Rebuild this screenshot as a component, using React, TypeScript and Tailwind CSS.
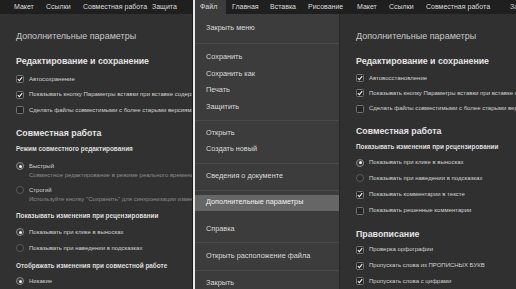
import React from "react";

const font = { fontFamily: '"Liberation Sans", Arial, sans-serif' };

// ribbon tabs with the widths they take in the screenshot
const tabs = [
  { t: "Файл", w: "w-[31px]", pl: "pl-[5px]" },
  { t: "Главная", w: "w-[38px]", pl: "pl-[6px]" },
  { t: "Вставка", w: "w-[38px]", pl: "pl-[6px]" },
  { t: "Рисование", w: "w-[49px]", pl: "pl-[6px]" },
  { t: "Макет", w: "w-[32px]", pl: "pl-[6px]" },
  { t: "Ссылки", w: "w-[37px]", pl: "pl-[6px]" },
  { t: "Совместная работа", w: "w-[84px]", pl: "pl-[6px]" },
  { t: "Защита", w: "w-[40px]", pl: "pl-[6px]" },
];

const leftTabs = [
  { t: "Макет", w: "w-[32px]", pl: "pl-[6px]" },
  { t: "Ссылки", w: "w-[37px]", pl: "pl-[6px]" },
  { t: "Совместная работа", w: "w-[75px]", pl: "pl-[6px]" },
  { t: "Защита", w: "w-[40px]", pl: "pl-[0px]" },
];

function Check({ on }: { on: boolean }) {
  return (
    <span className="w-[8px] h-[8px] shrink-0 rounded-[1.5px] border border-[#727272] bg-[#262626] flex items-center justify-center">
      {on && (
        <svg width="6" height="6" viewBox="0 0 6 6">
          <path d="M0.8 3.1 L2.4 4.6 L5.2 1.2" stroke="#f0f0f0" strokeWidth="1.1" fill="none" />
        </svg>
      )}
    </span>
  );
}

function Radio({ on }: { on: boolean }) {
  return (
    <span
      className={
        "w-[8px] h-[8px] shrink-0 rounded-full border flex items-center justify-center " +
        (on ? "border-[#8a8a8a] bg-[#3a3a3a]" : "border-[#5c5c5c] bg-[#2a2a2a]")
      }
    >
      {on && <span className="w-[3px] h-[3px] rounded-full bg-[#f2f2f2]" />}
    </span>
  );
}

function Row({ kind, on, text, h = "h-[15.5px]", mt = "" }: { kind: "cb" | "rd"; on: boolean; text: string; h?: string; mt?: string }) {
  return (
    <div className={`${h} ${mt} flex items-center gap-[5px] whitespace-nowrap`}>
      {kind === "cb" ? <Check on={on} /> : <Radio on={on} />}
      <span className="text-[6px] text-[#d2d2d2]">{text}</span>
    </div>
  );
}

function Title() {
  return <div className="h-[16px] mt-[15px] flex items-center text-[9px] text-[#c8c8c8] whitespace-nowrap">Дополнительные параметры</div>;
}

function Section({ text, mt }: { text: string; mt: string }) {
  return <div className={`h-[14px] ${mt} flex items-center text-[8.8px] font-bold text-[#e4e4e4] whitespace-nowrap`}>{text}</div>;
}

function Sub({ text, mt }: { text: string; mt: string }) {
  return <div className={`h-[14px] ${mt} flex items-center text-[6.4px] font-bold text-[#dedede] whitespace-nowrap`}>{text}</div>;
}

function TabBar({ items, active, className }: { items: { t: string; w: string; pl: string }[]; active?: string; className: string }) {
  return (
    <div className={`h-[14px] shrink-0 bg-[#1f1f1f] flex items-stretch whitespace-nowrap overflow-hidden ${className}`}>
      {items.map((t) => (
        <div
          key={t.t}
          className={`${t.w} ${t.pl} shrink-0 flex items-center text-[7px] text-[#dcdcdc] ${t.t === active ? "bg-[#3c3c3c]" : ""}`}
        >
          {t.t}
        </div>
      ))}
    </div>
  );
}

function LeftPane() {
  return (
    <div className="w-[192px] shrink-0 bg-[#313131] flex flex-col overflow-hidden">
      <TabBar items={leftTabs} className="pl-[8px]" />
      <div className="pl-[16px] flex flex-col">
        <Title />
        <Section text="Редактирование и сохранение" mt="mt-[10px]" />
        <Row kind="cb" on text="Автосохранение" mt="mt-[2.25px]" />
        <Row kind="cb" on text="Показывать кнопку Параметры вставки при вставке содержимого" />
        <Row kind="cb" on={false} text="Сделать файлы совместимыми с более старыми версиями MS Word" />
        <Section text="Совместная работа" mt="mt-[9.25px]" />
        <Sub text="Режим совместного редактирования" mt="mt-[1px]" />
        <div className="mt-[5.5px] h-[9px] flex items-center gap-[5px]">
          <Radio on />
          <span className="text-[6px] text-[#d2d2d2]">Быстрый</span>
        </div>
        <div className="h-[9px] pl-[13px] flex items-center text-[6px] text-[#8c8c8c] whitespace-nowrap">
          Совместное редактирование в режиме реального времени
        </div>
        <div className="mt-[6px] h-[9px] flex items-center gap-[5px]">
          <Radio on={false} />
          <span className="text-[6px] text-[#d2d2d2]">Строгий</span>
        </div>
        <div className="h-[9px] pl-[13px] flex items-center text-[6px] text-[#8c8c8c] whitespace-nowrap">
          Используйте кнопку "Сохранить" для синхронизации изменений
        </div>
        <Sub text="Показывать изменения при рецензировании" mt="mt-[5.5px]" />
        <Row kind="rd" on text="Показывать при клике в выносках" h="h-[16px]" mt="mt-[1px]" />
        <Row kind="rd" on={false} text="Показывать при наведении в подсказках" h="h-[16px]" />
        <Sub text="Отображать изменения при совместной работе" mt="mt-[3px]" />
        <Row kind="rd" on text="Никакие" h="h-[16px]" />
      </div>
    </div>
  );
}

type MenuEntry = { t: string; h: string; sel?: boolean } | "div";

const menu: MenuEntry[] = [
  { t: "Закрыть меню", h: "h-[29px]" },
  "div",
  { t: "", h: "h-[5px]" },
  { t: "Сохранить", h: "h-[16.7px]" },
  { t: "Сохранить как", h: "h-[16.7px]" },
  { t: "Печать", h: "h-[16.7px]" },
  { t: "Защитить", h: "h-[16.7px]" },
  { t: "", h: "h-[4px]" },
  "div",
  { t: "", h: "h-[5px]" },
  { t: "Открыть", h: "h-[16px]" },
  { t: "Создать новый", h: "h-[16px]" },
  { t: "", h: "h-[5px]" },
  "div",
  { t: "Сведения о документе", h: "h-[26px]" },
  "div",
  { t: "", h: "h-[4px]" },
  { t: "Дополнительные параметры", h: "h-[16px]", sel: true },
  { t: "", h: "h-[11px]" },
  { t: "Справка", h: "h-[16px]" },
  { t: "", h: "h-[4px]" },
  "div",
  { t: "Открыть расположение файла", h: "h-[27px]" },
  "div",
  { t: "Закрыть", h: "h-[26px]" },
];

function FileMenu() {
  return (
    <div className="w-[145px] shrink-0 bg-[#3c3c3c] flex flex-col border-r border-[#262626]">
      {menu.map((m, i) =>
        m === "div" ? (
          <div key={i} className="h-px shrink-0 bg-[#4a4a4a]" />
        ) : (
          <div
            key={i}
            className={`${m.h} shrink-0 flex items-center pl-[11px] text-[7.3px] whitespace-nowrap ${
              m.sel ? "bg-[#666666] text-[#f0f0f0]" : "text-[#dadada]"
            }`}
          >
            {m.t}
          </div>
        )
      )}
    </div>
  );
}

function RightPane() {
  return (
    <div className="flex-1 flex flex-col overflow-hidden">
      <TabBar items={tabs} active="Файл" className="" />
      <div className="flex flex-1 overflow-hidden">
        <FileMenu />
        <div className="flex-1 bg-[#303030] pl-[16px] flex flex-col overflow-hidden">
          <Title />
          <Section text="Редактирование и сохранение" mt="mt-[10px]" />
          <Row kind="cb" on text="Автовосстановление" mt="mt-[2.25px]" />
          <Row kind="cb" on text="Показывать кнопку Параметры вставки при вставке содержимого" />
          <Row kind="cb" on={false} text="Сделать файлы совместимыми с более старыми версиями MS Word" />
          <Section text="Совместная работа" mt="mt-[8.25px]" />
          <Sub text="Показывать изменения при рецензировании" mt="mt-[2px]" />
          <Row kind="rd" on text="Показывать при клике в выносках" h="h-[16px]" mt="mt-[1px]" />
          <Row kind="rd" on={false} text="Показывать при наведении в подсказках" h="h-[16px]" />
          <Row kind="cb" on text="Показывать комментарии в тексте" h="h-[16px]" mt="mt-[1px]" />
          <Row kind="cb" on={false} text="Показывать решенные комментарии" h="h-[16px]" />
          <Section text="Правописание" mt="mt-[9px]" />
          <Row kind="cb" on text="Проверка орфографии" h="h-[16px]" mt="mt-[1px]" />
          <Row kind="cb" on text="Пропускать слова из ПРОПИСНЫХ БУКВ" h="h-[16px]" />
          <Row kind="cb" on text="Пропускать слова с цифрами" h="h-[16px]" />
        </div>
      </div>
    </div>
  );
}

export default function App() {
  return (
    <div className="w-[516px] h-[289px] flex overflow-hidden bg-[#2a2a2a]" style={font}>
      <LeftPane />
      <div className="w-px shrink-0 bg-[#1a1a1a]" />
      <div className="w-[2px] shrink-0 bg-[#e8e8e8]" />
      <RightPane />
    </div>
  );
}
